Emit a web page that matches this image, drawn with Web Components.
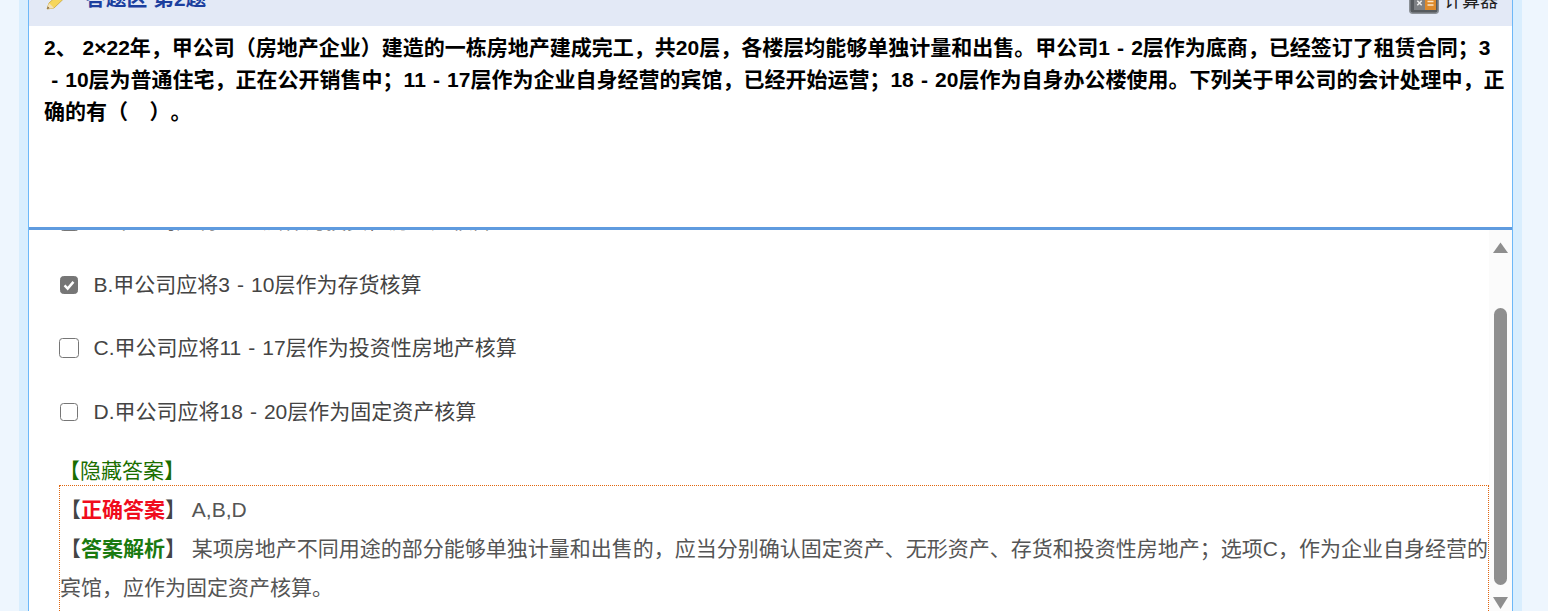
<!DOCTYPE html>
<html lang="zh-CN"><head><meta charset="utf-8"><title>答题区</title>
<style>
html,body{margin:0;height:611px;overflow:hidden;background:#eef6fe;font-family:"Liberation Sans","Noto Sans CJK SC",sans-serif}
</style></head><body>
<exam-app>
  <exam-header slot="header" title-text="答题区 第2题" tool="计算器"></exam-header>
  <exam-question slot="question">2、<span style="word-spacing:0"> </span>2×22年，甲公司（房地产企业）建造的一栋房地产建成完工，共20层，各楼层均能够单独计量和出售。甲公司1 - 2层作为底商，已经签订了租赁合同；3<br>&nbsp;- 10层为普通住宅，正在公开销售中；11 - 17层作为企业自身经营的宾馆，已经开始运营；18 - 20层作为自身办公楼使用。下列关于甲公司的会计处理中，正<br>确的有（&nbsp;&nbsp; ）。</exam-question>
  <exam-option slot="options" checked size="19">A.甲公司应将1 - 2层作为投资性房地产核算</exam-option>
  <exam-option slot="options" checked>B.甲公司应将3 - 10层作为存货核算</exam-option>
  <exam-option slot="options" size="20">C.甲公司应将11 - 17层作为投资性房地产核算</exam-option>
  <exam-option slot="options">D.甲公司应将18 - 20层作为固定资产核算</exam-option>
  <exam-answer slot="answer"></exam-answer>
  <exam-scrollbar slot="scrollbar"></exam-scrollbar>
</exam-app>
<script>
function def(name, html){
  customElements.define(name, class extends HTMLElement{
    connectedCallback(){
      if(this.shadowRoot) return;
      const r=this.attachShadow({mode:'open'});
      r.innerHTML=typeof html==='function'?html(this):html;
    }
  });
}
const FONT='"Liberation Sans","Noto Sans CJK SC",sans-serif';
const CHECK="url(\"data:image/svg+xml,%3Csvg xmlns='http://www.w3.org/2000/svg' viewBox='0 0 18 18'%3E%3Cpath d='M4 9.500l3.500 3.500L14 5.500' fill='none' stroke='white' stroke-width='2.800'/%3E%3C/svg%3E\")";
def('exam-app',`<style>
:host{display:block;height:611px;overflow:hidden;padding:0 26px 0 19px;background:#eef6fe}
.band{height:611px;background:#d9eefe;padding:0 9px;box-sizing:border-box}
.panel{height:611px;box-sizing:border-box;border:solid #6db8f8;border-width:0 1px;background:#fff;display:flex;flex-direction:column;overflow:hidden}
.divider{flex:none;height:3px;background:#5f9bdf}
.lower{flex:1;min-height:0;display:flex;overflow:hidden}
.scroll{flex:1;min-width:0;overflow:hidden;padding-left:30px}
.inner{margin-top:-40.5px}
</style>
<div class="band"><div class="panel">
<slot name="header"></slot><slot name="question"></slot><div class="divider"></div>
<div class="lower"><div class="scroll"><div class="inner"><slot name="options"></slot><slot name="answer"></slot></div></div><slot name="scrollbar"></slot></div>
</div></div>`);
def('exam-header',el=>`<style>
:host{display:flex;flex:none;align-items:flex-end;height:60px;margin-top:-34px;background:#e3e9f6;padding:0 14px 0 15px;box-sizing:border-box}
.pen{flex:none;width:22px;height:22px;margin:0 19px 13px 0}
.t{font:bold 20.8px/28px ${FONT};color:#1c3f9e;flex:1;margin-bottom:13px;text-spacing-trim:space-all}
.calc{flex:none;width:30px;height:22px;margin:0 5px 12px 0}
.k{font:18px/28px ${FONT};color:#222;margin-bottom:11px}
</style>
<svg class="pen" viewBox="0 0 22 22"><path d="M3 18l2-6L16 2l5 4.500L10 17z" fill="#f6d65a" stroke="#c9a63c" stroke-width=".8"/><path d="M3 18l2-6 5 5z" fill="#f4e2b8"/><path d="M3 18l.8-2.500 1.800 1.700z" fill="#7a5a30"/><path d="M16 2l5 4.500-2 2-5-4.500z" fill="#e2a13a"/></svg>
<span class="t">${el.getAttribute('title-text')}</span>
<svg class="calc" viewBox="0 0 30 22"><rect x=".75" y=".75" width="28.500" height="20.500" rx="3" fill="#565a5e" stroke="#8b9096" stroke-width="1.500"/><rect x="5" y="4" width="11" height="14" fill="#7d8084"/><path d="M8.300 8.800l4.400 4.400m0-4.400l-4.400 4.400" stroke="#eeeeee" stroke-width="1.500"/><rect x="16" y="4" width="11" height="14" fill="#dd8a2c"/><path d="M18.500 9.500h6m-6 3.500h6" stroke="#fbe6c8" stroke-width="1.500"/></svg>
<span class="k">${el.getAttribute('tool')}</span>`);
def('exam-question',`<style>
:host{display:block;flex:none;height:201px;box-sizing:border-box;padding:6px 0 0 15px;background:#fff;font:bold 21px/32px ${FONT};word-spacing:1.3px;color:#000;overflow:hidden;white-space:nowrap;text-spacing-trim:space-all}
</style><slot></slot>`);
def('exam-option',el=>{const s=+(el.getAttribute('size')||18);return `<style>
:host{display:flex;align-items:center;height:63.5px;font:21px/30px ${FONT};word-spacing:1.2px;color:#444;text-spacing-trim:space-all}
.box{flex:none;width:34.500px;display:flex}
input{appearance:none;box-sizing:border-box;margin:0 0 0 ${s===20?'0':'1px'};width:${s}px;height:${s}px;border:1.500px solid #767676;border-radius:3.500px;background:#fff}
input:checked{background:#767676 ${CHECK} center/100% no-repeat}
</style><span class="box"><input type="checkbox" ${el.hasAttribute('checked')?'checked':''}></span><slot></slot>`});
def('exam-answer',`<style>
:host{display:block;margin-top:12px;font:21px/39px ${FONT};color:#555;white-space:nowrap;text-spacing-trim:space-all}
.hide{height:29px;line-height:30px;color:#1a6e00}
.box{border:1px dotted #e0660f;padding:4.500px 0 0;height:200px;box-sizing:border-box}
b{font-weight:bold}.red{color:#f00c1c}.green{color:#1a7a10}.br{color:#444}
</style>
<div class="hide">【隐藏答案】</div>
<div class="box">
<div><span class="br">【</span><b class="red">正确答案</b><span class="br">】</span> <span>A,B,D</span></div>
<div><span class="br">【</span><b class="green">答案解析</b><span class="br">】</span> <span>某项房地产不同用途的部分能够单独计量和出售的，应当分别确认固定资产、无形资产、存货和投资性房地产；选项C，作为企业自身经营的<br>宾馆，应作为固定资产核算。</span></div>
</div>`);
def('exam-scrollbar',`<style>
:host{display:flex;flex:none;width:23px;box-sizing:border-box;background:#fbfbfb;flex-direction:column;padding:12px 0 0 4px}
svg{display:block;width:15px;flex:none}
.thumb{flex:none;width:13px;height:277px;margin:55px 0 12px 1px;border-radius:6.500px;background:#8e8e8e}
</style>
<svg height="11" viewBox="0 0 15 11"><path d="M7.500 .5L15 11H0z" fill="#8e8e8e"/></svg>
<div class="thumb"></div>
<svg height="12" viewBox="0 0 15 12"><path d="M0 0H15L7.500 12z" fill="#8e8e8e"/></svg>`);
</script>
</body></html>
